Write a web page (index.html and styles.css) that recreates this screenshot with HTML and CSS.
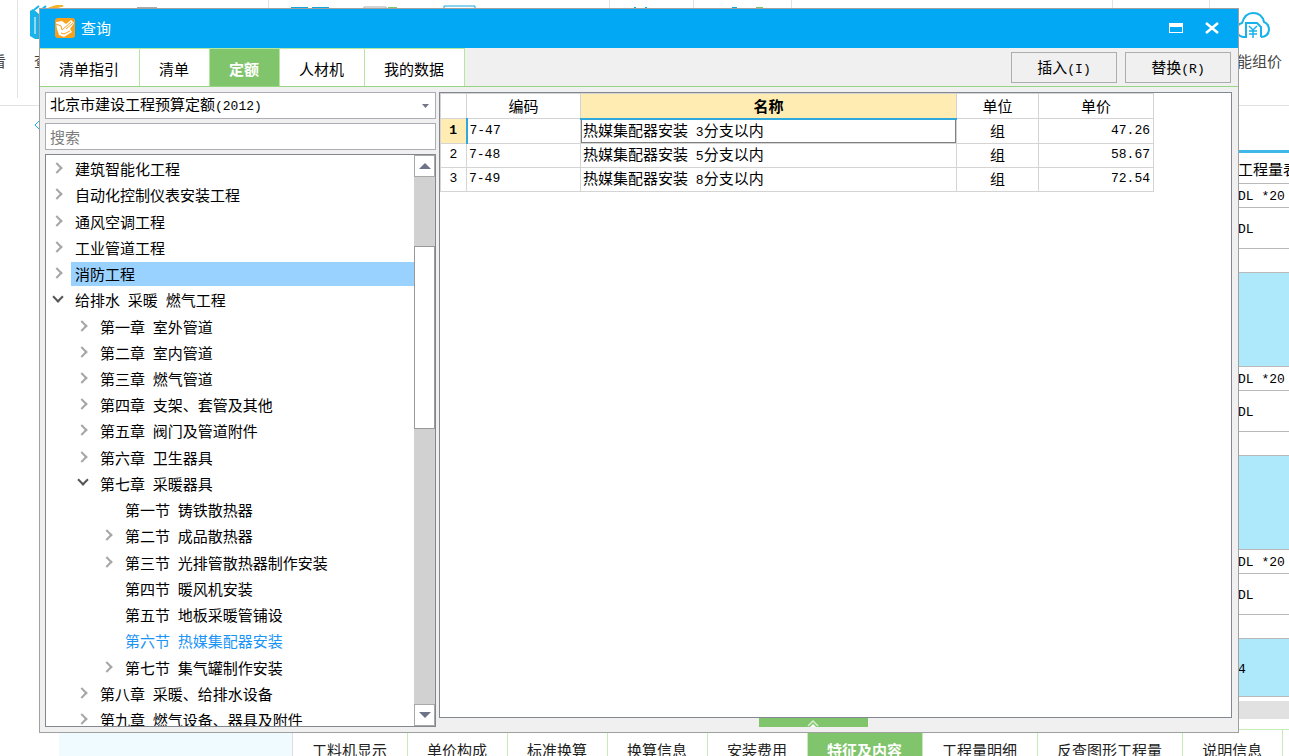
FILE: index.html
```html
<!DOCTYPE html>
<html lang="zh-CN">
<head>
<meta charset="utf-8">
<meta name="viewport" content="width=device-width, initial-scale=1">
<title>查询</title>
<link rel="stylesheet" href="styles.css">
</head>
<body>
<div class="app">
  <header class="ribbon">
    <div class="group group-view"><span class="ribbon-label">查看</span></div>
    <div class="group group-query">
      <div class="tool">
        <svg width="34" height="36" viewBox="0 0 34 36"><path d="M0 6 3 4 9 9V34H5L0 31Z" fill="#17b3ea"/><path d="M5 12V29" stroke="#fff" stroke-width="1"/><path d="M4 5 9 1M11 5 16 1" stroke="#17b3ea" stroke-width="2"/><path d="M19 4 25 2 33 0" stroke="#f5b32c" stroke-width="3"/></svg>
        <span class="ribbon-label">查询</span>
      </div>
      <svg class="strip" width="60" height="10" viewBox="0 0 60 10"><path d="M3 8H23" stroke="#aaa" stroke-width="2"/></svg>
    </div>
    <div class="group group-edit">
      <svg class="strip" width="220" height="10" viewBox="0 0 220 10"><path d="M22 8H39M43 8H60" stroke="#17a5de" stroke-width="2"/><path d="M95 10V7H117V10" fill="none" stroke="#aaa"/><path d="M119 8H128" stroke="#80c46c" stroke-width="2"/><path d="M175 10V6H206V10" fill="none" stroke="#17a5de"/></svg>
    </div>
    <div class="group group-small"><svg class="strip" width="60" height="10" viewBox="0 0 60 10"><path d="M24 8H26M35 8H37" stroke="#17a5de" stroke-width="2"/></svg></div>
    <div class="group group-mid"><svg class="strip" width="90" height="10" viewBox="0 0 90 10"><path d="M38 8H43" stroke="#17a5de" stroke-width="2"/><path d="M62 8H69" stroke="#80c46c" stroke-width="2"/></svg></div>
    <div class="group group-wide"></div>
    <div class="group group-last"></div>
    <div class="group group-price">
      <div class="tool">
        <svg width="36" height="30" viewBox="0 0 36 30" fill="none" stroke="#17b3ea" stroke-width="2"><path d="M11 26H9Q3 25 3 19Q3 13 8 12Q11 2 19 2Q28 2 30 11Q35 13 35 19Q34 26 27 26"/><path d="M10 26H12V12H23L27 16V26"/><path d="M15 15 19 19 23 15M19 19V27M15 20H23M15 23H23" stroke-width="1.500"/></svg>
        <span class="ribbon-label">智能组价</span>
      </div>
    </div>
  </header>
  <main class="workspace">
    <div class="gutter"><svg width="6" height="10" viewBox="0 0 6 10"><path d="M5 1 1 5 5 9" fill="none" stroke="#17b3ea"/></svg></div>
    <div class="sheet">
      <div class="cell head">工程量表</div>
      <div class="cell latin">DL *20</div>
      <div class="cell latin tall">DL</div>
      <div class="cell"></div>
      <div class="cell marked"></div>
      <div class="cell latin">DL *20</div>
      <div class="cell latin tall">DL</div>
      <div class="cell"></div>
      <div class="cell marked"></div>
      <div class="cell latin">DL *20</div>
      <div class="cell latin tall">DL</div>
      <div class="cell"></div>
      <div class="cell latin marked short">4</div>
      <div class="hscroll"></div>
    </div>
  </main>
  <nav class="details">
    <div class="details-side"></div>
    <button>工料机显示</button><button>单价构成</button><button>标准换算</button><button>换算信息</button><button>安装费用</button><button class="active">特征及内容</button><button>工程量明细</button><button>反查图形工程量</button><button>说明信息</button>
  </nav>
</div>

<section class="dialog" role="dialog" aria-labelledby="dialog-title">
  <header class="titlebar">
    <svg width="20" height="20" viewBox="0 0 20 20"><rect width="20" height="20" rx="3" fill="#f9a11b"/><path d="M1 4 7 3 11 6 16 2 19 5 15 11 17 14 9 19 4 17 2 11Z" fill="#fff"/><path d="M1 6 6 8 7 12 16 4M6 15 9 16 15 13M11 11 18 5" fill="none" stroke="#f9a11b" stroke-width="1"/></svg>
    <h1 id="dialog-title">查询</h1>
    <button class="winbtn" aria-label="最大化"><svg width="14" height="10" viewBox="0 0 14 10"><path d="M0 0H14V10H0ZM1 4V9H13V4Z" fill="#fff" fill-rule="evenodd"/></svg></button>
    <button class="winbtn" aria-label="关闭"><svg width="14" height="12" viewBox="0 0 14 12"><path d="M1 1 13 11M13 1 1 11" stroke="#fff" stroke-width="2.500"/></svg></button>
  </header>
  <div class="toolbar">
    <nav class="tabs">
      <button>清单指引</button><button>清单</button><button class="active">定额</button><button>人材机</button><button>我的数据</button>
    </nav>
    <div class="actions">
      <button>插入<span class="latin">(I)</span></button>
      <button>替换<span class="latin">(R)</span></button>
    </div>
  </div>
  <div class="content">
    <aside class="sidebar">
      <button class="library" aria-haspopup="listbox"><span>北京市建设工程预算定额<span class="latin">(2012)</span></span><svg width="7" height="4" viewBox="0 0 7 4"><path d="M0 0H7L3.500 4Z" fill="#717786"/></svg></button>
      <input class="search" type="text" placeholder="搜索" aria-label="搜索">
      <div class="treebox">
        <div class="treeview">
          <ul class="tree">
            <li class="shut"><div>建筑智能化工程</div></li>
            <li class="shut"><div>自动化控制仪表安装工程</div></li>
            <li class="shut"><div>通风空调工程</div></li>
            <li class="shut"><div>工业管道工程</div></li>
            <li class="shut selected"><div>消防工程</div></li>
            <li class="open"><div>给排水<span class="latin"> </span>采暖<span class="latin"> </span>燃气工程</div></li>
            <li class="shut l2"><div>第一章<span class="latin"> </span>室外管道</div></li>
            <li class="shut l2"><div>第二章<span class="latin"> </span>室内管道</div></li>
            <li class="shut l2"><div>第三章<span class="latin"> </span>燃气管道</div></li>
            <li class="shut l2"><div>第四章<span class="latin"> </span>支架、套管及其他</div></li>
            <li class="shut l2"><div>第五章<span class="latin"> </span>阀门及管道附件</div></li>
            <li class="shut l2"><div>第六章<span class="latin"> </span>卫生器具</div></li>
            <li class="open l2"><div>第七章<span class="latin"> </span>采暖器具</div></li>
            <li class="l3"><div>第一节<span class="latin"> </span>铸铁散热器</div></li>
            <li class="shut l3"><div>第二节<span class="latin"> </span>成品散热器</div></li>
            <li class="shut l3"><div>第三节<span class="latin"> </span>光排管散热器制作安装</div></li>
            <li class="l3"><div>第四节<span class="latin"> </span>暖风机安装</div></li>
            <li class="l3"><div>第五节<span class="latin"> </span>地板采暖管铺设</div></li>
            <li class="l3 current"><div>第六节<span class="latin"> </span>热媒集配器安装</div></li>
            <li class="shut l3"><div>第七节<span class="latin"> </span>集气罐制作安装</div></li>
            <li class="shut l2"><div>第八章<span class="latin"> </span>采暖、给排水设备</div></li>
            <li class="shut l2"><div>第九章<span class="latin"> </span>燃气设备、器具及附件</div></li>
          </ul>
        </div>
        <div class="scrollbar">
          <button aria-label="向上滚动"><svg width="12" height="6" viewBox="0 0 12 6"><path d="M0 6 6 0 12 6Z" fill="#6f7387"/></svg></button>
          <div class="track"><div class="thumb"></div></div>
          <button aria-label="向下滚动"><svg width="12" height="6" viewBox="0 0 12 6"><path d="M0 0 6 6 12 0Z" fill="#6f7387"/></svg></button>
        </div>
      </div>
    </aside>
    <div class="results">
      <table>
        <colgroup><col class="c-no"><col class="c-code"><col class="c-name"><col class="c-unit"><col class="c-price"></colgroup>
        <thead><tr><th></th><th>编码</th><th class="hot">名称</th><th>单位</th><th>单价</th></tr></thead>
        <tbody>
          <tr class="focus"><th class="latin">1</th><td class="latin">7-47</td><td class="name">热媒集配器安装<span class="latin"> 3</span>分支以内</td><td class="unit">组</td><td class="latin price">47.26</td></tr>
          <tr><th class="latin">2</th><td class="latin">7-48</td><td class="name">热媒集配器安装<span class="latin"> 5</span>分支以内</td><td class="unit">组</td><td class="latin price">58.67</td></tr>
          <tr><th class="latin">3</th><td class="latin">7-49</td><td class="name">热媒集配器安装<span class="latin"> 8</span>分支以内</td><td class="unit">组</td><td class="latin price">72.54</td></tr>
        </tbody>
      </table>
    </div>
  </div>
  <footer class="dialog-foot">
    <button class="handle" aria-label="展开"><svg width="12" height="8" viewBox="0 0 12 8"><path d="M1 7 6 2 11 7" fill="none" stroke="#d6efce" stroke-width="1.500"/><path d="M3 8 6 5 9 8Z" fill="#fff"/></svg></button>
  </footer>
</section>
</body>
</html>
```
FILE: styles.css
```css
*, ::before { box-sizing: border-box; }
body {
  margin: 0;
  height: 100vh;
  overflow: hidden;
  position: relative;
  background: #fff;
  color: #000;
  font: 15px/24px "Noto Sans CJK SC", sans-serif;
}
button, input { font: inherit; color: inherit; border-radius: 0; }
button { padding: 0; border: 0; background: none; white-space: nowrap; }
svg { display: block; flex: none; }
.latin { font-size: 13px; font-family: "Liberation Mono", monospace; }

/* main window */
.app { height: 100%; display: flex; flex-direction: column; }
.ribbon { flex: none; height: 106px; display: flex; border-bottom: 1px solid #e2e2e2; }
.group { display: flex; height: 98px; border-right: 1px solid #e2e2e2; overflow: hidden; }
.group-view { width: 18px; padding-top: 49px; justify-content: flex-end; padding-right: 11px; }
.group-query { width: 251px; padding-left: 12px; gap: 70px; }
.group-edit { width: 341px; }
.group-small { width: 84px; }
.group-mid { width: 98px; }
.group-wide { flex: 1; }
.group-last { width: 97px; }
.group-price { width: 79px; padding-left: 12px; border: 0; }
.tool { display: flex; flex-direction: column; padding-top: 5px; gap: 8px; align-items: center; }
.group-query .tool { width: 34px; align-items: flex-start; }
.group-query .ribbon-label { padding-left: 4px; }
.group-price .tool { padding-top: 11px; }
.ribbon-label { white-space: nowrap; flex: none; color: #444; }
.workspace { flex: 1; min-height: 0; display: flex; justify-content: space-between; padding-bottom: 10px; }
.gutter { padding: 14px 0 0 34px; }
.sheet { width: 51px; margin-top: 44px; border-top: 3px solid #3fb8e8; overflow: hidden; }
.cell { height: 24px; line-height: 26px; border-bottom: 1px solid #b9b9b9; white-space: nowrap; }
.head { height: 31px; line-height: 31px; }
.tall { height: 41px; line-height: 43px; }
.marked { height: 94px; background: #aee8fb; }
.short { height: 58px; line-height: 61px; }
.hscroll { height: 18px; margin-top: 4px; background: #e1e1e1; }
.details { flex: none; height: 27px; display: flex; margin-left: 59px; border-top: 1px solid #c5ecb5; overflow: hidden; }
.details-side { flex: none; width: 234px; background: #effbff; border-right: 1px solid #ddd; }
.details button { flex: none; height: 40px; padding: 0 20px 0 19px; border-right: 1px solid #c5ecb5; color: #222; }
.details .active { background: #80c46c; color: #fff; font-weight: bold; }

/* dialog */
.dialog {
  position: absolute;
  inset: 8px 50px 23px 39px;
  display: flex;
  flex-direction: column;
  background: #f0f0f0;
  border: 1px solid #a0a0a0;
}
.titlebar { flex: none; height: 39px; display: flex; align-items: center; gap: 6px; padding: 0 19px 1px 15px; background: #02a8f3; color: #fff; }
.titlebar h1 { flex: 1; margin: 0; font-size: 15px; font-weight: normal; }
.winbtn { padding: 2px 0; margin-left: 16px; }
.toolbar { flex: none; height: 39px; display: flex; justify-content: space-between; border-bottom: 1px solid #97d585; }
.tabs { display: flex; }
.tabs button { padding: 2px 20px 0 19px; background: #fff; border-right: 1px solid #b4e8a1; border-top: 1px solid #b4e8a1; }
.tabs .active { background: #80c46c; color: #fff; font-weight: bold; }
.actions { display: flex; gap: 8px; padding: 4px 7px 3px 0; }
.actions button { width: 106px; padding-top: 1px; border: 1px solid #adadad; }
.content { flex: 1; min-height: 0; display: flex; gap: 3px; padding: 5px 6px 0 5px; }
.sidebar { flex: none; width: 391px; display: flex; flex-direction: column; gap: 4px; margin-bottom: -9px; }
.library { flex: none; height: 27px; display: flex; align-items: center; justify-content: space-between; padding: 0 6px 0 4px; background: #fff; border: 1px solid #abadb3; }
.search { flex: none; height: 27px; width: 100%; padding: 0 4px; background: #fff; border: 1px solid #abadb3; }
.search::placeholder { color: #7d7d7d; opacity: 1; }
.treebox { flex: 1; min-height: 0; display: flex; background: #fff; border: 1px solid #828790; }
.treeview { flex: 1; overflow: hidden; }
.tree { height: calc(100% + 7px); display: flex; flex-direction: column; margin: 0; padding: 1px 0 0; list-style: none; }
.tree li { flex: 1; display: flex; align-items: center; padding-left: 25px; min-height: 0; }
.tree div { flex: 1; padding-left: 4px; height: 24px; white-space: nowrap; }
.tree .l2 { padding-left: 50px; }
.tree .l3 { padding-left: 75px; }
.shut::before, .open::before {
  content: "";
  width: 8px;
  height: 8px;
  margin: 0 10px 2px -18px;
  border: solid #a6a6a6;
  border-width: 2px 2px 0 0;
  transform: rotate(45deg);
}
.open::before { margin: 0 9px 7px -17px; border-color: #555; transform: rotate(135deg); }
.selected div { background: #99d1ff; }
.current { color: #1a94f5; }
.scrollbar { flex: none; width: 21px; display: flex; flex-direction: column; background: #d1d1d1; }
.scrollbar button { flex: none; height: 22px; display: grid; place-items: center; background: #fff; border: 1px solid #a8a8a8; }
.track { flex: 1; padding-top: 69px; }
.thumb { height: 40%; background: #fff; border: 1px solid #999; }
.results { flex: 1; min-width: 0; overflow: hidden; background: #fff; border: 1px solid #828790; }
table { table-layout: fixed; width: 713px; border-collapse: collapse; }
.c-no { width: 26px; }
.c-code { width: 114px; }
.c-name { width: 376px; }
.c-unit { width: 82px; }
.c-price { width: 115px; }
th, td { height: 24px; padding: 0 2px; line-height: 20px; border: 1px solid #d4d4d4; font-weight: normal; text-align: left; }
th { text-align: center; }
thead th { height: 25px; }
th.hot { background: #ffecb3; font-weight: bold; border-bottom: 2px solid #31a8dc; }
.focus th { background: #ffecb3; font-weight: bold; border-right: 2px solid #31a8dc; }
.focus .name { box-shadow: inset -1px -1px #808080, inset 1px 0 #808080; }
.unit { text-align: center; }
td.price { text-align: right; padding-right: 3px; }
.dialog-foot { flex: none; height: 14px; padding-left: 60%; }
.handle { display: grid; place-items: center; width: 109px; height: 9px; background: #80c46c; }
```
